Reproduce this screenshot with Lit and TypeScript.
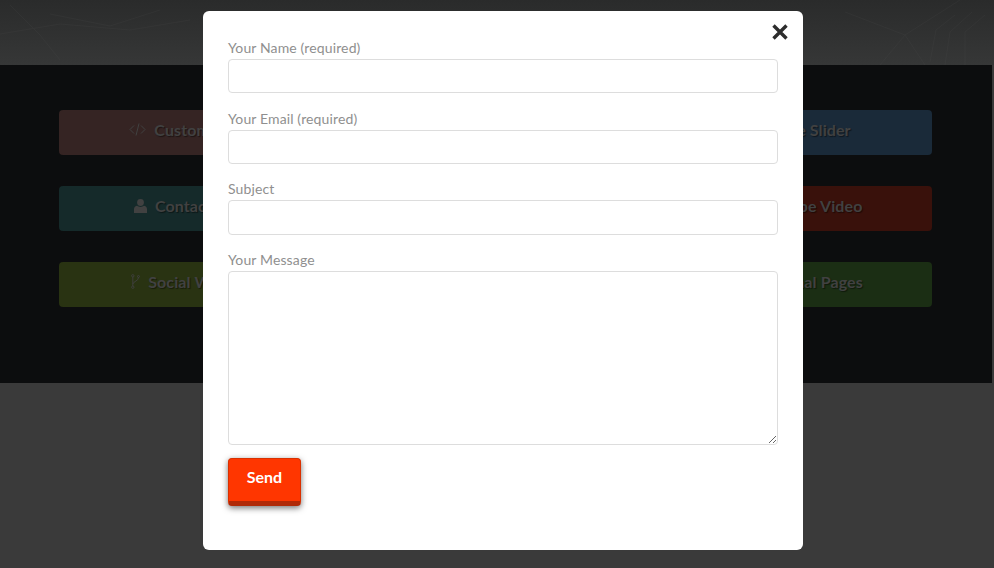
import { LitElement, html, css, svg } from "lit";
import { customElement } from "lit/decorators.js";

const codeIcon = html`<svg class="ic" width="17" height="13" viewBox="0 0 17 13" fill="none" stroke="currentColor" stroke-width="1"><path d="M5 2.500 1 6.500l4 4M12 2.500l4 4-4 4M10 .5 7 12.500"/></svg>`;
const userIcon = html`<svg class="ic" width="13" height="14" viewBox="0 0 13 14" fill="currentColor"><circle cx="6.500" cy="3.500" r="3.400"/><path d="M0 14V10C0 8.200 1.500 7 3.200 6.800 4 7.500 5.200 8 6.500 8S9 7.500 9.800 6.800C11.500 7 13 8.200 13 10V14Z"/></svg>`;
const forkIcon = html`<svg class="ic" width="9" height="15" viewBox="0 0 9 15" fill="none" stroke="currentColor" stroke-width=".9"><circle cx="1.800" cy="1.800" r="1.200"/><circle cx="1.800" cy="13.200" r="1.200"/><circle cx="7.500" cy="2.500" r="1"/><path d="M1.800 3v9M7.500 3.500c0 3.500-4.700 3.500-5.700 6.500"/></svg>`;

/* `extra` widens a tile's content on the side that the dialog covers, so that the visible end of the label lands where the reference has it. */
type Tile = { label: string; bg: string; icon?: unknown; extra?: number; side?: "start" | "end" };
const tiles: Tile[] = [
  { label: "Custom HTML", bg: "#352423", icon: codeIcon, extra: 6, side: "end" },
  { label: "Carousel", bg: "#2b2b33" },
  { label: "Image Slider", bg: "#1a2a39", extra: 26, side: "start" },
  { label: "Contact Form", bg: "#152a2a", icon: userIcon, extra: 8, side: "end" },
  { label: "Pricing", bg: "#2b2b33" },
  { label: "Youtube Video", bg: "#39110b", extra: 32, side: "start" },
  { label: "Social Widgets", bg: "#293312", icon: forkIcon, extra: 9, side: "end" },
  { label: "Portfolio", bg: "#2b2b33" },
  { label: "Additional Pages", bg: "#1b2e14", extra: 18, side: "start" },
];

const texture = svg`<svg class="texture" viewBox="0 0 994 65" preserveAspectRatio="none" fill="none" stroke="#555" stroke-width="1" opacity=".14">
  <path d="M10 5 40 35 60 60M50 14 110 26 160 10M0 34 60 24 130 30 190 20"/>
  <path d="M880 65 905 35 960 0M905 35 925 65M930 62 936 30 955 15M945 65 950 32 972 12M965 65 965 32 985 15M845 12 905 35"/>
</svg>`;

@customElement("app-root")
export class AppRoot extends LitElement {
  static styles = css`
    :host {
      display: block;
      position: relative;
      width: 994px;
      height: 568px;
      overflow: hidden;
      background: #3a3a3a;
      font-family: Lato, "Liberation Sans", sans-serif;
    }
    .hero {
      position: relative;
      height: 65px;
      background: linear-gradient(#2a2b2b, #363737);
    }
    .texture {
      position: absolute;
      inset: 0;
      width: 100%;
      height: 100%;
    }
    .band {
      width: 992px;
      height: 318px;
      box-sizing: border-box;
      padding: 45px 60px 0 59px;
      background: #0c0d0e;
    }
    .grid {
      display: grid;
      grid-template-columns: repeat(3, 277px);
      justify-content: space-between;
      row-gap: 31px;
    }
    .tile {
      height: 45px;
      border-radius: 4px;
      display: flex;
      align-items: center;
      justify-content: center;
      gap: 8px;
      padding-bottom: 6px;
      box-sizing: border-box;
      color: #414141;
      font-size: 16px;
      font-weight: 700;
      letter-spacing: 0.1px;
      text-shadow: 1px 1px 1px rgba(0, 0, 0, 0.45);
    }
    .ic {
      flex: none;
    }
    .modal {
      position: absolute;
      left: 203px;
      top: 11px;
      width: 600px;
      height: 539px;
      box-sizing: border-box;
      padding: 28px 25px 0;
      background: #fff;
      border-radius: 6px;
    }
    .close {
      position: absolute;
      right: 14px;
      top: 12px;
      display: block;
    }
    label {
      display: block;
      height: 20px;
      color: #8f8f8f;
      font-size: 14px;
      letter-spacing: 0.13px;
      line-height: 18px;
    }
    .box {
      display: block;
      width: 550px;
      height: 34.4px;
      box-sizing: border-box;
      padding: 0;
      margin: 0 0 16.2px;
      border: 1px solid #ddd;
      border-radius: 4px;
      background: #fff;
      font: inherit;
    }
    textarea.box {
      height: 174px;
      margin-bottom: 13px;
      resize: vertical;
    }
    .send {
      display: block;
      width: 73px;
      height: 48px;
      padding: 0 0 6px;
      border: 1px solid #d93000;
      border-bottom: 5px solid #b02a08;
      border-radius: 4px;
      background: #ff3600;
      color: #fff;
      font: 700 16px Lato, "Liberation Sans", sans-serif;
      box-shadow: 0 2px 6px rgba(0, 0, 0, 0.55);
    }
  `;

  render() {
    return html`
      <div class="hero">${texture}</div>
      <section class="band">
        <div class="grid">
          ${tiles.map(
            (t) => html`<div class="tile" style="background:${t.bg}">
              ${t.icon ?? ""}
              <span style="padding-${t.side === "start" ? "left" : "right"}:${t.extra ?? 0}px">${t.label}</span>
            </div>`
          )}
        </div>
      </section>
      <form class="modal">
        <svg class="close" width="18" height="18" viewBox="0 0 18 18" stroke="#2d2d2d" stroke-width="3.400"><path d="M2.500 2.500 15.500 15.500M15.500 2.500 2.500 15.500"/></svg>
        <label for="n">Your Name (required)</label>
        <input id="n" class="box" />
        <label for="e">Your Email (required)</label>
        <input id="e" class="box" />
        <label for="s">Subject</label>
        <input id="s" class="box" />
        <label for="m">Your Message</label>
        <textarea id="m" class="box"></textarea>
        <button class="send" type="button">Send</button>
      </form>
    `;
  }
}
